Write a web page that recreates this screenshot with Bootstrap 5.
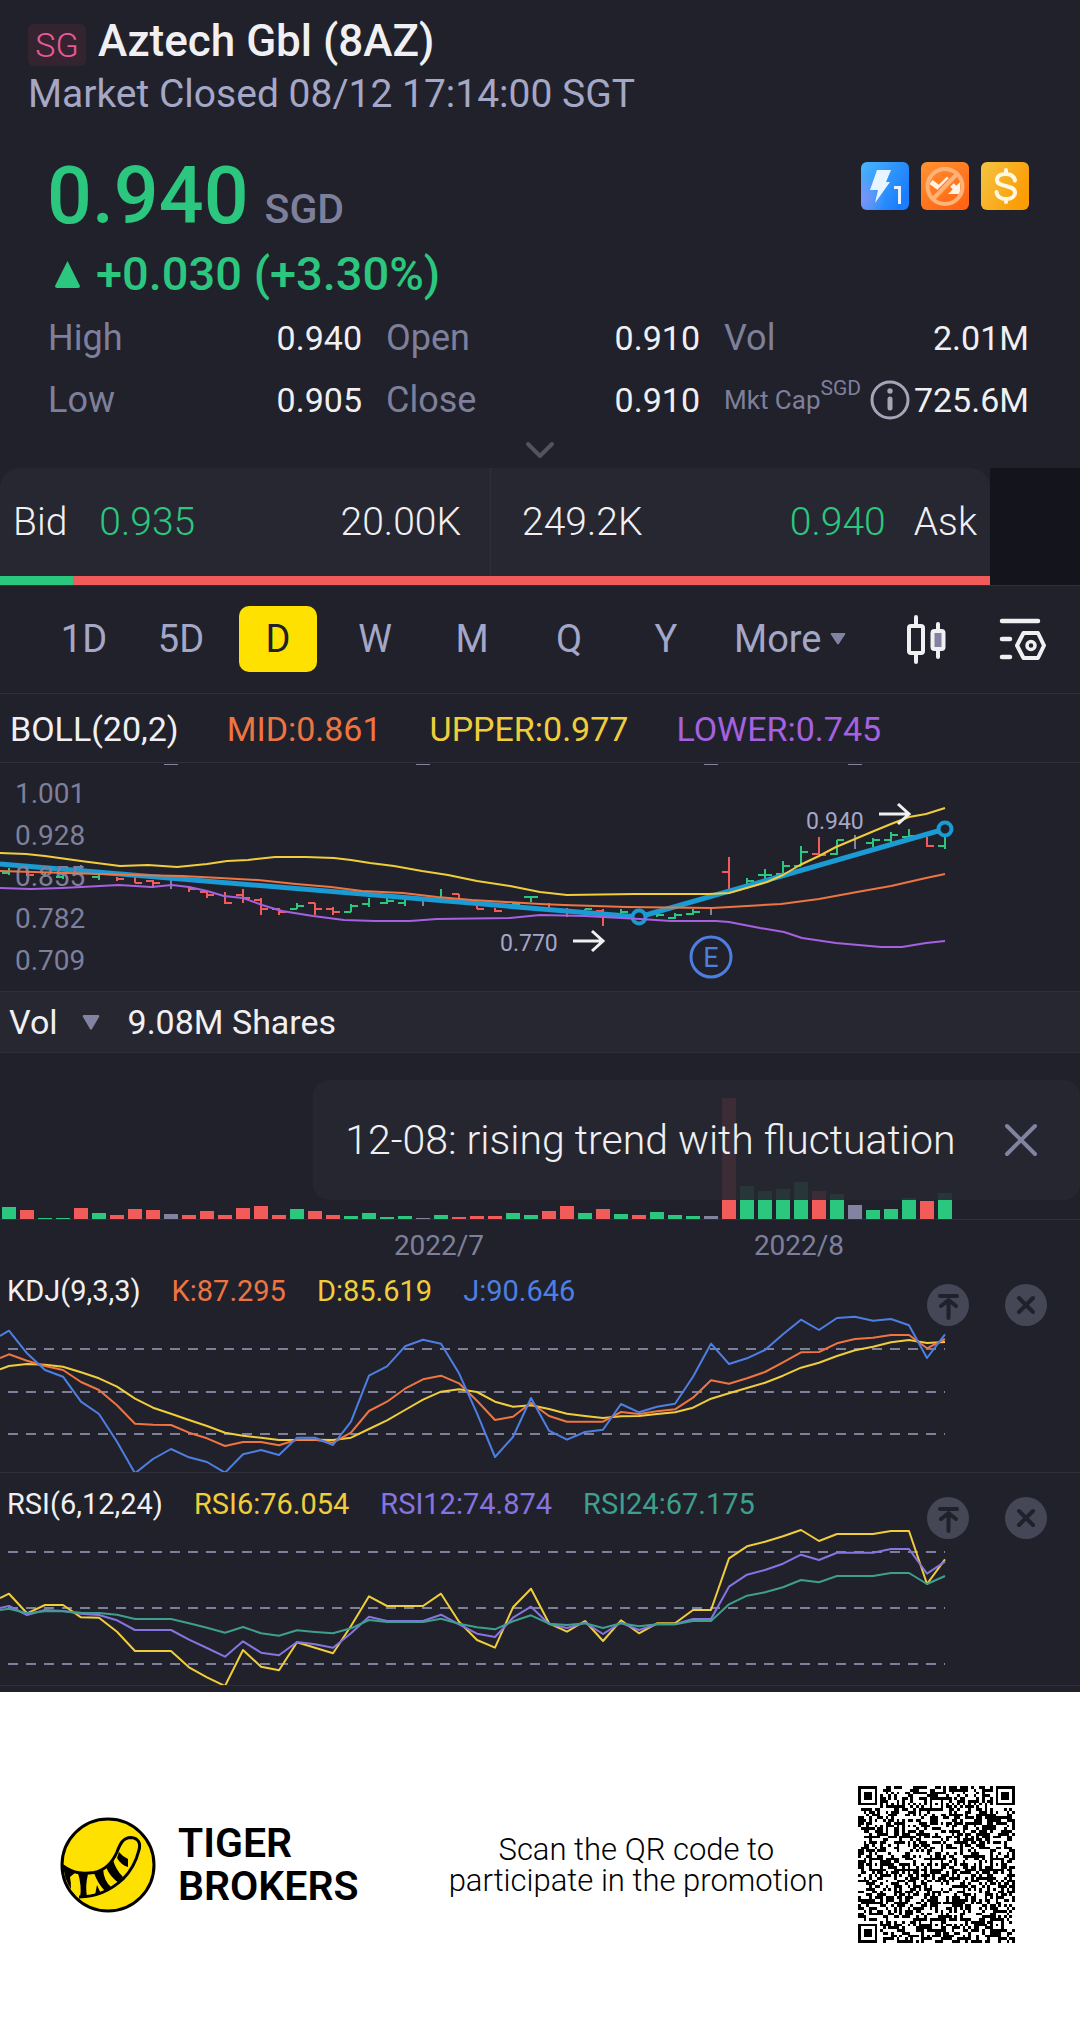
<!DOCTYPE html>
<html lang="en">
<head>
<meta charset="utf-8">
<meta name="viewport" content="width=device-width, initial-scale=1">
<title>Aztech Gbl (8AZ)</title>
<link href="https://cdn.jsdelivr.net/npm/bootstrap@5.3.0/dist/css/bootstrap.min.css" rel="stylesheet">
<style>
:root{--bg:#21212b;--panel:#272732;--rule:#2e2e3c;--text:#f0f0f2;--soft:#a5a7c6;--dim:#7e809b;--up:#2bc77f;--down:#f15b59;--orange:#ee7541;--yellow:#f0cd3b;--violet:#a561e0;--blue:#4d7fe2;--purple:#8674e0;--teal:#3e9f8d}
body{background:#fff;font-family:Roboto,"Liberation Sans",sans-serif;color:var(--text)}
.quote{background:var(--bg)}
.quote button{background:none;border:0;padding:0;color:inherit;display:inline-flex;align-items:center;justify-content:center}
svg{display:block;flex:none}
.chart{width:100%;height:auto}
.rule{border-top:1px solid var(--rule)}
.c-up{color:var(--up)}.c-orange{color:var(--orange)}.c-yellow{color:var(--yellow)}.c-violet{color:var(--violet)}.c-blue{color:var(--blue)}.c-purple{color:var(--purple)}.c-teal{color:var(--teal)}.c-dim{color:var(--dim)}
.head{padding:16px 28px 0}
.market{background:#34242f;color:#ea5a9b;border-radius:6px;width:58px;font-size:34px;line-height:42px;height:42px;text-align:center;font-weight:300}
.name{font-size:44px;line-height:50px;font-weight:500}
.status{font-size:39px;line-height:48px;margin-top:4px;color:var(--soft)}
.price-box{padding:38px 51px 0 47px}
.price{font-size:79px;line-height:80px;font-weight:500}
.unit{font-size:41px;line-height:40px;font-weight:500}
.flags{gap:12px;padding-top:6px}
.change{font-size:47px;line-height:56px;margin-top:10px;font-weight:500}
.stats{padding:5px 51px 0 48px;column-gap:24px}
.stats>div{flex:314 1 0;min-width:0;line-height:62px;font-size:34px}
.stats>div:last-child{flex-grow:305}
.stats .key{font-size:36px;color:var(--dim)}
.stats .cap-key{font-size:26px}
.cap-key span{font-size:21px;line-height:21px;position:relative;top:-14px}
.more-row{height:37px}
.book{background:#14141d}
.book-in{width:91.6667%;background:var(--panel);font-size:39px;line-height:108px;font-weight:300;border-radius:20px 20px 0 0;overflow:hidden}
.book-wrap{background:linear-gradient(var(--bg),var(--bg)) no-repeat;background-size:91.6667% 40px}
.book-in .bid{width:49.6%;padding:0 29px 0 13px;border-right:1px solid var(--rule)}
.book-in .ask{padding:0 13px 0 31px}
.depth{height:9px;background:var(--down)}
.depth div{height:100%;background:var(--up)}
.periods{padding:20px 34px 21px 45px;color:var(--soft);font-size:38px;font-weight:300}
.periods .period{width:78px;height:66px;border-radius:10px}
.periods .period.active{background:#ffe100;color:#21212b;font-weight:400}
.more-btn{margin-left:10px}
.chart-tools{column-gap:51px}
.boll{font-size:34px;line-height:71px;height:69px;padding-left:10px;column-gap:48px}
.volume-head{background:var(--panel);border-top:1px solid var(--rule);border-bottom:1px solid var(--rule);font-size:34px;line-height:60px;padding-left:9px}
.notice{top:27px;right:0;width:71%;background:rgba(39,39,50,.9);border-radius:16px;padding:0 42px 0 32px;font-size:41px;line-height:120px;font-weight:300}
.legend{font-size:29px;line-height:46px;padding-left:7px;column-gap:31px}
.tools{top:16px;right:33px;column-gap:36px}
.rsi{padding:8px 0 6px}
.rsi .chart{border-bottom:1px solid var(--rule);box-sizing:content-box}
.promo{color:#000;padding:94px 65px 94px 60px}
.brand-name{font-size:41px;line-height:43px;font-weight:600;margin-left:22px}
.scan{font-size:31px;line-height:31px;margin-right:34px;font-weight:300}
</style>
</head>
<body>
<main class="quote">
  <header class="head">
    <div class="d-flex align-items-end">
      <span class="market">SG</span>
      <h1 class="name mb-0 ms-2 ps-1">Aztech Gbl (8AZ)</h1>
    </div>
    <div class="status">Market Closed 08/12 17:14:00 SGT</div>
  </header>

  <section class="price-box">
    <div class="d-flex justify-content-between align-items-start">
      <div class="d-flex align-items-baseline c-up"><span class="price">0.940</span><span class="unit c-dim ms-3">SGD</span></div>
      <div class="flags d-flex">
        <svg width="48" height="48" viewBox="0 0 48 48"><defs><linearGradient id="gb" x1="0" y1="0" x2="1" y2=".6"><stop offset="0" stop-color="#4ab5fb"/><stop offset="1" stop-color="#1a7cff"/></linearGradient><radialGradient id="gv" cx="0" cy=".75" r=".5"><stop offset="0" stop-color="#8093f5"/><stop offset="1" stop-color="#8093f5" stop-opacity="0"/></radialGradient></defs><rect width="48" height="48" rx="6" fill="url(#gb)"/><rect width="48" height="48" rx="6" fill="url(#gv)"/><path d="M16 8h14l-5 12h4L14 41l3-13H9z" fill="#e6f5ff"/><path d="M33 25.500h5.500V42" fill="none" stroke="#e6f3ff" stroke-width="3"/></svg>
        <svg width="48" height="48" viewBox="0 0 48 48"><defs><linearGradient id="go" x1="0" y1="0" x2=".7" y2="1"><stop offset="0" stop-color="#ff9332"/><stop offset="1" stop-color="#ff6514"/></linearGradient></defs><rect width="48" height="48" rx="6" fill="url(#go)"/><path d="M10 20l8 6 8-8 8 8" fill="none" stroke="#fff3e6" stroke-width="5"/><path d="M39 20v12H27z" fill="#fff3e6"/><path d="M12 37L36 13" stroke="#ff7a22" stroke-width="7"/><circle cx="24" cy="24.500" r="17.500" fill="none" stroke="#ffb378" stroke-width="4"/><path d="M12 37L36 12" stroke="#ffb378" stroke-width="4"/></svg>
        <svg width="48" height="48" viewBox="0 0 48 48"><defs><linearGradient id="gy" x1="0" y1="0" x2="1" y2=".5"><stop offset="0" stop-color="#f5c443"/><stop offset="1" stop-color="#fb9d05"/></linearGradient></defs><rect width="48" height="48" rx="6" fill="url(#gy)"/><path d="M34 18.500c-1-5-5-6.500-9.500-6.500-5 0-8.500 2-8.500 6 0 8 18 4 18 12.500 0 4-4 6.500-9 6.500s-9-2.500-9.500-7M25 8v4M25 37v3" fill="none" stroke="#fff8e2" stroke-width="4" stroke-linecap="round"/></svg>
      </div>
    </div>
    <div class="change c-up d-flex align-items-center"><svg class="ms-2 me-3" width="25" height="28" viewBox="0 0 25 28"><path d="M12.500 1L25 26q0 2-2 2H2q-2 0-2-2z" fill="#2bc77f"/></svg><span>+0.030 (+3.30%)</span></div>
  </section>

  <section class="stats d-flex">
    <div>
      <div class="d-flex justify-content-between"><span class="key">High</span><span>0.940</span></div>
      <div class="d-flex justify-content-between"><span class="key">Low</span><span>0.905</span></div>
    </div>
    <div>
      <div class="d-flex justify-content-between"><span class="key">Open</span><span>0.910</span></div>
      <div class="d-flex justify-content-between"><span class="key">Close</span><span>0.910</span></div>
    </div>
    <div>
      <div class="d-flex justify-content-between"><span class="key">Vol</span><span>2.01M</span></div>
      <div class="d-flex align-items-center text-nowrap"><span class="key cap-key">Mkt Cap<span>SGD</span></span><button class="ms-auto me-1" aria-label="Market cap info"><svg width="40" height="40" viewBox="0 0 40 40"><circle cx="20" cy="20" r="18" fill="none" stroke="#a4a6b8" stroke-width="3"/><circle cx="20" cy="11" r="2.700" fill="#a4a6b8"/><path d="M20 19v9" stroke="#a4a6b8" stroke-width="5" stroke-linecap="round"/></svg></button><span>725.6M</span></div>
    </div>
  </section>
  <div class="more-row d-flex justify-content-center"><button aria-label="Show more"><svg width="30" height="18" viewBox="0 0 30 18"><path d="M3 3l12 12L27 3" fill="none" stroke="#51535f" stroke-width="4" stroke-linecap="round" stroke-linejoin="round"/></svg></button></div>

  <section class="book"><div class="book-wrap">
    <div class="book-in">
      <div class="d-flex">
        <div class="bid d-flex"><span>Bid</span><span class="c-up ms-4 ps-2">0.935</span><span class="ms-auto">20.00K</span></div>
        <div class="ask d-flex flex-grow-1"><span>249.2K</span><span class="c-up ms-auto me-4">0.940</span><span class="ps-1">Ask</span></div>
      </div>
      <div class="depth"><div style="width:7.4%"></div></div>
    </div>
  </div></section>

  <nav class="periods rule d-flex align-items-center justify-content-between">
    <div class="d-flex" style="gap:19px">
      <button class="period">1D</button><button class="period">5D</button><button class="period active">D</button><button class="period">W</button><button class="period">M</button><button class="period">Q</button><button class="period">Y</button>
      <button class="more-btn">More<svg class="ms-2" width="16" height="12" viewBox="0 0 16 12"><path d="M1.500 0h13q1.500 0 .6 1.400L9 10.800q-1 1.200-2 0L.9 1.400Q0 0 1.500 0z" fill="#8183a0"/></svg></button>
    </div>
    <div class="chart-tools d-flex align-items-center">
    <button aria-label="Chart type"><svg width="42" height="50" viewBox="0 0 42 50" fill="none" stroke="#f0f0f2" stroke-width="4" stroke-linecap="round"><path d="M11 3v8M11 40v8M33 10v7M33 36v7"/><rect x="4" y="12" width="14" height="27" rx="2"/><rect x="27.500" y="17" width="11" height="18" rx="2" fill="#8183a0"/></svg></button>
    <button aria-label="Chart settings"><svg width="48" height="44" viewBox="0 0 48 44" fill="none" stroke="#f0f0f2" stroke-width="4.500" stroke-linecap="round" stroke-linejoin="round"><path d="M4 4h36M4 22h8M4 40h8"/><path d="M19 28.500L25.500 16h14.500L46 28.500 40 41H25.500z" stroke-width="4"/><circle cx="33" cy="28.500" r="4" stroke-width="3.500"/></svg></button>
    </div>
  </nav>

  <div class="boll rule d-flex text-nowrap box-content"><span>BOLL(20,2)</span><span class="c-orange">MID:0.861</span><span class="c-yellow">UPPER:0.977</span><span class="c-violet">LOWER:0.745</span></div>
  <div class="rule mt-0 pt-0"><svg class="chart" id="price" viewBox="0 763 1080 228" role="img" aria-label="Price chart"></svg></div>

  <div class="volume-head d-flex align-items-center"><span>Vol</span><button class="ms-4 me-4" aria-label="Choose indicator"><svg width="18" height="15" viewBox="0 0 18 15"><path d="M2 0h14q2 0 1 2l-7 12q-1 1.400-2 0L1 2Q0 0 2 0z" fill="#8183a0"/></svg></button><span class="ps-1">9.08M Shares</span></div>
  <div class="position-relative">
    <svg class="chart" id="volume" viewBox="0 1053 1080 215" role="img" aria-label="Volume chart"></svg>
    <div class="notice position-absolute d-flex align-items-center justify-content-between text-nowrap"><span>12-08: rising trend with fluctuation</span><button aria-label="Dismiss"><svg width="34" height="34" viewBox="0 0 34 34"><path d="M3 3l28 28M31 3L3 31" stroke="#8183a0" stroke-width="4" stroke-linecap="round"/></svg></button></div>
  </div>

  <section>
    <div class="legend d-flex position-relative"><span>KDJ(9,3,3)</span><span class="c-orange">K:87.295</span><span class="c-yellow">D:85.619</span><span class="c-blue">J:90.646</span>
      <div class="tools d-flex position-absolute"><button aria-label="Move KDJ to top"><svg width="42" height="42"><use href="#i-top"/></svg></button><button aria-label="Remove KDJ"><svg width="42" height="42"><use href="#i-x"/></svg></button></div></div>
    <svg class="chart" id="kdj" viewBox="0 1314 1080 158" role="img" aria-label="KDJ chart"></svg>
  </section>
  <section class="rsi rule">
    <div class="legend d-flex position-relative"><span>RSI(6,12,24)</span><span class="c-yellow">RSI6:76.054</span><span class="c-purple">RSI12:74.874</span><span class="c-teal">RSI24:67.175</span>
      <div class="tools d-flex position-absolute"><button aria-label="Move RSI to top"><svg width="42" height="42"><use href="#i-top"/></svg></button><button aria-label="Remove RSI"><svg width="42" height="42"><use href="#i-x"/></svg></button></div></div>
    <svg class="chart" id="rsi" viewBox="0 1527 1080 158" role="img" aria-label="RSI chart"></svg>
  </section>
</main>

<footer class="promo d-flex align-items-center">
  <svg width="96" height="96" viewBox="0 0 96 96"><circle cx="48" cy="48" r="46" fill="#ffe100"/><path d="M3 49C14 57 24 57 34 55.500 47 53 53 44 57 35 60 27 63 20.500 71 20.500 78 21 81 26 79 33 76 45 71 54 63 62 50 74 36 80 19 80" fill="none" stroke="#000" stroke-width="3"/><path d="M3 47q7 6 13 8l-6 5q1 5 1 12Q4 62 3 47zM18 56l10 1q-3 12-1 23l-7 1q2-12-2-25zM34 56l9-4q1 12 8 18l-6 4q-7-7-11-18zM37 68l4 9-6 1zM46 50l7-7q3 10 10 17l-4 6q-9-6-13-16zM57 41l2-6q4 5 9 7v8q-7-2-11-9z" fill="#000"/><circle cx="48" cy="48" r="46" fill="none" stroke="#000" stroke-width="3"/></svg>
  <div class="brand-name">TIGER<br>BROKERS</div>
  <div class="scan ms-auto text-center text-nowrap">Scan the QR code to<br>participate in the promotion</div>
  <svg id="qr" width="157" height="157" viewBox="0 0 57 57" shape-rendering="crispEdges" role="img" aria-label="QR code"></svg>
</footer>

<svg width="0" height="0" class="position-absolute"><defs>
  <g id="i-top"><circle cx="21" cy="21" r="21" fill="#454757"/><path d="M13 12h17M21.500 34V17M14 22l7.500-6 7.500 6" fill="none" stroke="#21212b" stroke-width="4" stroke-linecap="round" stroke-linejoin="round"/></g>
  <g id="i-x"><circle cx="21" cy="21" r="21" fill="#454757"/><path d="M14 14l14 14M28 14L14 28" stroke="#21212b" stroke-width="4" stroke-linecap="round"/></g>
</defs></svg>

<script src="https://cdn.jsdelivr.net/npm/bootstrap@5.3.0/dist/js/bootstrap.bundle.min.js"></script>
<script>
const put = (id, html) => { document.getElementById(id).innerHTML = html; };
const tone = { g: '#2bc77f', r: '#f15b59', n: '#8183a0' };
const px = i => 9 + 18 * i;
const line = (pts, color, w = 2) => `<polyline points="${pts}" fill="none" stroke="${color}" stroke-width="${w}" stroke-linejoin="round"/>`;
const label = (x, y, s, t, fill, anchor = 'start') => `<text x="${x}" y="${y}" font-size="${s}" fill="${fill}" text-anchor="${anchor}">${t}</text>`;

/* Price bars: tone, high, low, open, close (0 = no tick) */
const bars = [['g',868,875,873,0],['r',870,876,0,875],['g',872,877,0,0],['g',873,879,877,0],['r',865,875,0,0],['g',875,880,877,0],['r',877,881,0,879],['r',877,883,0,883],['r',880,888,881,883],['n',880,889,0,0],
['r',887,892,0,889],['r',892,898,892,895],['r',892,904,0,903],['r',889,903,895,898],['r',898,915,900,909],['r',908,915,909,912],['g',903,909,909,906],['r',903,915,903,909],['r',907,915,909,912],['g',904,912,912,906],
['g',898,907,904,0],['g',898,904,903,901],['g',898,906,903,0],['n',900,906,0,0],['g',889,898,0,0],['r',894,898,894,0],['r',905,909,0,909],['r',908,912,0,911],['g',902,906,0,904],['g',897,902,897,897],
['r',903,908,0,0],['r',908,917,0,0],['g',909,912,911,909],['r',909,926,911,0],['g',909,916,0,912],['g',912,916,0,0],['g',910,917,0,915],['g',913,919,918,915],['g',909,915,914,912],['n',908,915,0,0],
['r',857,889,872,0],['g',878,886,0,881],['g',869,879,875,875],['g',861,875,874,866],['g',846,866,866,852],['r',837,855,854,855],['g',840,855,854,840],['n',835,849,0,0],['g',838,847,843,840],['g',832,843,840,835],['g',829,838,837,836],['r',837,847,0,846],['g',837,849,846,0]];
const upper = '0,853 26,854 45,856 81,861 120,866 148,865 177,867 207,864 227,861 248,860 275,857 306,857 334,858 351,860 370,863 394,866 422,871 448,875 477,881 510,886 540,892 567,895 635,894 709,894 729,893 750,887 767,882 783,875 800,865 819,856 836,847 855,839 874,831 891,824 909,817 926,814 945,808';
const mid = '0,871 134,875 182,876 220,878 258,880 296,884 331,887 362,891 403,893 437,897 472,900 540,904 564,905 626,907 712,908 747,906 781,904 819,899 857,892 891,886 926,878 945,874';
const lower = '0,888 31,889 62,888 119,885 151,887 172,885 189,887 207,891 224,896 243,898 262,905 282,911 313,916 344,920 375,921 410,921 437,919 510,918 540,915 585,916 640,919 671,921 716,921 729,922 760,928 784,932 802,938 836,943 881,947 902,947 926,943 945,941';
const arrow = (x, y) => `<path d="M${x} ${y}h30m-11-10l11 10l-11 10" fill="none" stroke="#f0f0f2" stroke-width="3"/>`;
put('price',
  [164, 416, 704, 848].map(x => `<path d="M${x} 764.500h14" stroke="#8183a0"/>`).join('') +
  bars.map(([c, h, l, o, k], i) => `<path d="M${px(i)} ${h}V${l}${o ? `M${px(i) - 7} ${o}h7` : ''}${k ? `M${px(i)} ${k}h7` : ''}" fill="none" stroke="${tone[c]}" stroke-width="2"/>`).join('') +
  line('0,864 639,917 945,829', '#1a9bd3', 5) +
  ['1.001', '0.928', '0.855', '0.782', '0.709'].map((t, i) => label(15, Math.round(803 + i * 41.700), 28, t, '#7e809b')).join('') +
  [[639, 917], [945, 829]].map(([x, y]) => `<circle cx="${x}" cy="${y}" r="6.500" fill="#21212b" stroke="#1a9bd3" stroke-width="4"/>`).join('') +
  line(upper, '#f0cd3b') + line(mid, '#ee7541') + line(lower, '#a561e0') +
  label(500, 951, 23, '0.770', '#a5a7c6') + arrow(573, 941) +
  label(806, 829, 23, '0.940', '#a5a7c6') + arrow(879, 814) +
  '<circle cx="711" cy="957" r="20" fill="none" stroke="#4d7fe2" stroke-width="3"/>' +
  label(711, 967, 27, 'E', '#4d7fe2', 'middle'));

const vol = [12,9,1,1,11,6,4,10,9,5,4,8,4,11,13,4,10,8,4,3,6,2,3,1,4,2,3,3,6,4,8,13,6,10,5,4,7,4,3,3,121,33,28,30,37,28,25,14,9,10,21,18,26];
const volTone = 'grggrgrrrnrrrrrrgrrggggngrrrggrrgrgrgggnrggggrgngggrg';
put('volume',
  vol.map((h, i) => `<rect x="${px(i) - 7}" y="${1219 - h}" width="14" height="${h}" fill="${tone[volTone[i]]}"/>`).join('') +
  '<path d="M0 1219.500H1080" stroke="#2e2e3c"/>' +
  label(439, 1255, 28, '2022/7', '#7e809b', 'middle') + label(799, 1255, 28, '2022/8', '#7e809b', 'middle'));

/* Indicator series are stored in thirds of a unit below the panel origin */
const series = (origin, first, vals, color) =>
  line([`0,${origin + first / 3}`, ...vals.map((v, i) => `${px(i)},${(origin + v / 3).toFixed(1)}`)].join(' '), color);
const grid = ys => ys.map(y => `<path d="M8 ${y}H945" stroke="#7e809b" stroke-width="2" stroke-dasharray="10 8"/>`).join('');
put('kdj', grid([1349, 1392, 1434]) +
  series(1060, 928, [918,912,914,920,937,955,980,1016,1043,1061,1080,1098,1118,1127,1133,1140,1140,1139,1140,1133,1107,1081,1050,1019,995,988,996,1025,1040,1036,1047,1061,1068,1074,1069,1068,1062,1057,1043,1016,1000,984,968,947,923,908,888,871,860,847,840,849,846], '#f0cd3b') +
  series(1060, 894, [883,902,918,930,966,990,1036,1091,1094,1095,1118,1135,1158,1146,1146,1156,1139,1139,1148,1118,1053,1025,986,958,947,970,1022,1080,1070,1028,1068,1085,1085,1085,1056,1062,1054,1048,1013,961,971,955,936,907,877,876,850,837,833,825,825,865,837], '#ee7541') +
  series(1060, 828, [812,880,930,950,1025,1062,1145,1240,1197,1167,1192,1206,1238,1183,1170,1185,1133,1133,1155,1085,947,919,859,839,851,940,1060,1191,1131,1014,1112,1139,1116,1109,1032,1057,1040,1031,950,851,912,895,870,823,779,810,774,770,782,777,796,894,823], '#4d7fe2'));
put('rsi', grid([1552, 1608, 1664]) +
  series(1470, 384, [371,430,405,405,442,443,485,543,543,543,592,622,648,540,590,601,517,533,550,468,379,408,408,408,371,455,510,533,412,356,460,485,453,513,451,490,460,460,420,420,265,229,215,199,180,213,192,192,192,183,183,342,268], '#f0cd3b') +
  series(1470, 414, [408,435,420,423,431,435,451,480,480,480,509,534,560,514,548,556,516,523,533,490,440,453,453,453,434,463,491,501,443,410,462,474,458,492,458,480,463,463,447,447,350,314,300,281,254,270,248,248,248,237,237,311,275], '#8674e0') +
  series(1470, 420, [416,430,424,424,428,429,434,447,447,447,460,473,488,471,490,497,481,486,490,475,450,456,456,456,446,461,472,478,454,436,461,465,460,474,460,469,463,463,453,453,403,377,367,352,330,337,318,318,318,309,309,342,318], '#3e9f8d'));

/* QR symbol: finder, alignment and timing patterns round the data modules */
const N = 57, cells = [];
let seed = 20220812;
const rnd = () => (seed = (seed * 1103515245 + 12345) % 2147483648) / 2147483648;
for (let y = 0; y < N; y++) for (let x = 0; x < N; x++) {
  let on = rnd() < .5;
  if (y === 6) on = x % 2 === 0;
  if (x === 6) on = y % 2 === 0;
  for (const cy of [6, 28, 50]) for (const cx of [6, 28, 50]) {
    const d = Math.max(Math.abs(x - cx), Math.abs(y - cy));
    if (d <= 2 && !((cx === 6 || cx === 50) && (cy === 6 || cy === 50) && !(cx === 50 && cy === 50))) on = d !== 1;
  }
  for (const [fx, fy] of [[3, 3], [53, 3], [3, 53]]) {
    const d = Math.max(Math.abs(x - fx), Math.abs(y - fy));
    if (d <= 4) on = d !== 2 && d !== 4;
  }
  if (on) cells.push(`M${x} ${y}h1v1h-1z`);
}
put('qr', `<path d="${cells.join('')}"/>`);
</script>
</body>
</html>
